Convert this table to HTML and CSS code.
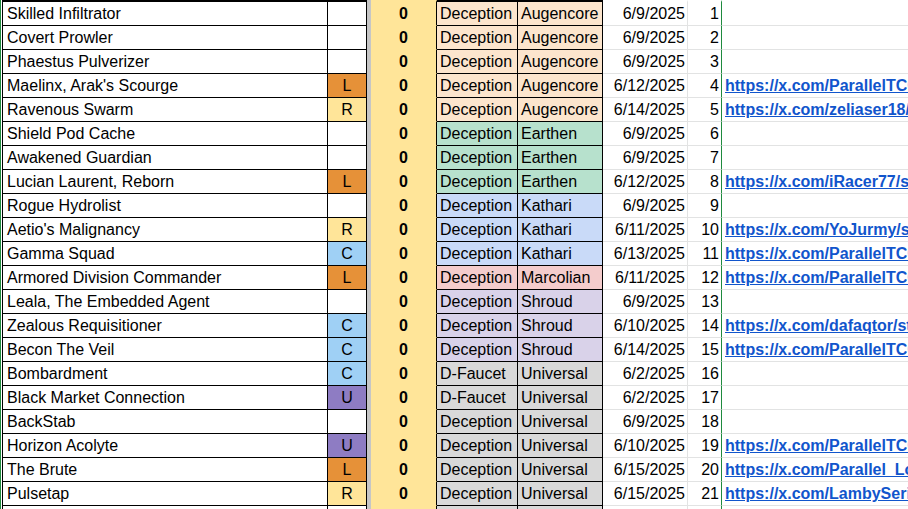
FILE: index.html
```html
<!DOCTYPE html>
<html lang="en">
<head>
<meta charset="utf-8">
<title>Deception cards</title>
<link rel="stylesheet" href="styles.css">
</head>
<body>
<div class="sheet">
  <div class="row first aug"><div class="name">Skilled Infiltrator</div><div class="rar"></div><div class="frz"></div><div class="cnt">0</div><div class="set">Deception</div><div class="fac">Augencore</div><div class="date">6/9/2025</div><div class="num">1</div><div class="link"></div></div>
  <div class="row aug"><div class="name">Covert Prowler</div><div class="rar"></div><div class="frz"></div><div class="cnt">0</div><div class="set">Deception</div><div class="fac">Augencore</div><div class="date">6/9/2025</div><div class="num">2</div><div class="link"></div></div>
  <div class="row aug"><div class="name">Phaestus Pulverizer</div><div class="rar"></div><div class="frz"></div><div class="cnt">0</div><div class="set">Deception</div><div class="fac">Augencore</div><div class="date">6/9/2025</div><div class="num">3</div><div class="link"></div></div>
  <div class="row aug"><div class="name">Maelinx, Arak's Scourge</div><div class="rar r-l">L</div><div class="frz"></div><div class="cnt">0</div><div class="set">Deception</div><div class="fac">Augencore</div><div class="date">6/12/2025</div><div class="num">4</div><div class="link"><a href="#">https://x.com/ParallelTCG/status/1933</a></div></div>
  <div class="row aug"><div class="name">Ravenous Swarm</div><div class="rar r-r">R</div><div class="frz"></div><div class="cnt">0</div><div class="set">Deception</div><div class="fac">Augencore</div><div class="date">6/14/2025</div><div class="num">5</div><div class="link"><a href="#">https://x.com/zeliaser18/status/1933</a></div></div>
  <div class="row ear"><div class="name">Shield Pod Cache</div><div class="rar"></div><div class="frz"></div><div class="cnt">0</div><div class="set">Deception</div><div class="fac">Earthen</div><div class="date">6/9/2025</div><div class="num">6</div><div class="link"></div></div>
  <div class="row ear"><div class="name">Awakened Guardian</div><div class="rar"></div><div class="frz"></div><div class="cnt">0</div><div class="set">Deception</div><div class="fac">Earthen</div><div class="date">6/9/2025</div><div class="num">7</div><div class="link"></div></div>
  <div class="row ear"><div class="name">Lucian Laurent, Reborn</div><div class="rar r-l">L</div><div class="frz"></div><div class="cnt">0</div><div class="set">Deception</div><div class="fac">Earthen</div><div class="date">6/12/2025</div><div class="num">8</div><div class="link"><a href="#">https://x.com/iRacer77/status/1933</a></div></div>
  <div class="row kat"><div class="name">Rogue Hydrolist</div><div class="rar"></div><div class="frz"></div><div class="cnt">0</div><div class="set">Deception</div><div class="fac">Kathari</div><div class="date">6/9/2025</div><div class="num">9</div><div class="link"></div></div>
  <div class="row kat"><div class="name">Aetio's Malignancy</div><div class="rar r-r">R</div><div class="frz"></div><div class="cnt">0</div><div class="set">Deception</div><div class="fac">Kathari</div><div class="date">6/11/2025</div><div class="num">10</div><div class="link"><a href="#">https://x.com/YoJurmy/status/1933</a></div></div>
  <div class="row kat"><div class="name">Gamma Squad</div><div class="rar r-c">C</div><div class="frz"></div><div class="cnt">0</div><div class="set">Deception</div><div class="fac">Kathari</div><div class="date">6/13/2025</div><div class="num">11</div><div class="link"><a href="#">https://x.com/ParallelTCG/status/1933</a></div></div>
  <div class="row mar"><div class="name">Armored Division Commander</div><div class="rar r-l">L</div><div class="frz"></div><div class="cnt">0</div><div class="set">Deception</div><div class="fac">Marcolian</div><div class="date">6/11/2025</div><div class="num">12</div><div class="link"><a href="#">https://x.com/ParallelTCG/status/1933</a></div></div>
  <div class="row shr"><div class="name">Leala, The Embedded Agent</div><div class="rar"></div><div class="frz"></div><div class="cnt">0</div><div class="set">Deception</div><div class="fac">Shroud</div><div class="date">6/9/2025</div><div class="num">13</div><div class="link"></div></div>
  <div class="row shr"><div class="name">Zealous Requisitioner</div><div class="rar r-c">C</div><div class="frz"></div><div class="cnt">0</div><div class="set">Deception</div><div class="fac">Shroud</div><div class="date">6/10/2025</div><div class="num">14</div><div class="link"><a href="#">https://x.com/dafaqtor/status/1933</a></div></div>
  <div class="row shr"><div class="name">Becon The Veil</div><div class="rar r-c">C</div><div class="frz"></div><div class="cnt">0</div><div class="set">Deception</div><div class="fac">Shroud</div><div class="date">6/14/2025</div><div class="num">15</div><div class="link"><a href="#">https://x.com/ParallelTCG/status/1934</a></div></div>
  <div class="row uni"><div class="name">Bombardment</div><div class="rar r-c">C</div><div class="frz"></div><div class="cnt">0</div><div class="set">D-Faucet</div><div class="fac">Universal</div><div class="date">6/2/2025</div><div class="num">16</div><div class="link"></div></div>
  <div class="row uni"><div class="name">Black Market Connection</div><div class="rar r-u">U</div><div class="frz"></div><div class="cnt">0</div><div class="set">D-Faucet</div><div class="fac">Universal</div><div class="date">6/2/2025</div><div class="num">17</div><div class="link"></div></div>
  <div class="row uni"><div class="name">BackStab</div><div class="rar"></div><div class="frz"></div><div class="cnt">0</div><div class="set">Deception</div><div class="fac">Universal</div><div class="date">6/9/2025</div><div class="num">18</div><div class="link"></div></div>
  <div class="row uni"><div class="name">Horizon Acolyte</div><div class="rar r-u">U</div><div class="frz"></div><div class="cnt">0</div><div class="set">Deception</div><div class="fac">Universal</div><div class="date">6/10/2025</div><div class="num">19</div><div class="link"><a href="#">https://x.com/ParallelTCG/status/1934</a></div></div>
  <div class="row uni"><div class="name">The Brute</div><div class="rar r-l">L</div><div class="frz"></div><div class="cnt">0</div><div class="set">Deception</div><div class="fac">Universal</div><div class="date">6/15/2025</div><div class="num">20</div><div class="link"><a href="#">https://x.com/Parallel_Lore/status/1934</a></div></div>
  <div class="row uni"><div class="name">Pulsetap</div><div class="rar r-r">R</div><div class="frz"></div><div class="cnt">0</div><div class="set">Deception</div><div class="fac">Universal</div><div class="date">6/15/2025</div><div class="num">21</div><div class="link"><a href="#">https://x.com/LambySeries/status/1934</a></div></div>
  <div class="row uni"><div class="name"></div><div class="rar"></div><div class="frz"></div><div class="cnt"></div><div class="set"></div><div class="fac"></div><div class="date"></div><div class="num"></div><div class="link"></div></div>
</div>
</body>
</html>
```
FILE: styles.css
```css
html, body {
  margin: 0;
  padding: 0;
  background: #ffffff;
}
body {
  width: 908px;
  height: 509px;
  overflow: hidden;
  font-family: "Liberation Sans", Arial, sans-serif;
  font-size: 16px;
  color: #000000;
}
.sheet {
  border-left: 1px solid #1e8a3e;
  padding-left: 1px;
  width: 907px;
  box-sizing: border-box;
}
.row {
  display: grid;
  grid-template-columns: 326px 39px 4px 66px 81px 85px 85px 34px 186px;
  height: 24px;
}
.row > div {
  box-sizing: border-box;
  height: 24px;
  line-height: 23px;
  white-space: nowrap;
  overflow: hidden;
  border-bottom: 1px solid #000000;
}
.row.first, .row.first > div {
  height: 26px;
}
.row.first > div {
  border-top: 2px solid #000000;
}
.name {
  border-left: 1px solid #000000;
  border-right: 1px solid #000000;
  padding-left: 4px;
}
.rar {
  border-right: 1px solid #000000;
  text-align: center;
}
.r-l { background: #e69138; }
.r-r { background: #ffe599; }
.r-c { background: #9fd0f5; }
.r-u { background: #8e7cc3; }
.row > .frz {
  background: #c6c6c6;
  border-bottom-color: #c6c6c6;
}
.row.first > .frz {
  border-top-color: #c6c6c6;
}
.row > .cnt {
  background: #ffe599;
  border-right: 1px solid #000000;
  border-bottom-color: #ffe599;
  font-weight: bold;
  text-align: center;
}
.row.first > .cnt {
  border-top-color: #ffe599;
}
.set, .fac {
  border-right: 1px solid #000000;
  padding-left: 3px;
}
.aug .set, .aug .fac { background: #fce5cd; }
.ear .set, .ear .fac { background: #b7e1cd; }
.kat .set, .kat .fac { background: #c9daf8; }
.mar .set, .mar .fac { background: #f4cccc; }
.shr .set, .shr .fac { background: #d9d2e9; }
.uni .set, .uni .fac { background: #d9d9d9; }
.row > .date {
  text-align: right;
  padding-right: 2px;
  border-right: 1px solid #e2e3e3;
  border-bottom-color: #e2e3e3;
}
.row > .num {
  text-align: right;
  padding-right: 2px;
  border-right: 1px solid #1e8a3e;
  border-bottom-color: #e2e3e3;
}
.row > .link {
  padding-left: 3px;
  border-bottom-color: #e2e3e3;
  overflow: hidden;
}
.row.first > .date, .row.first > .num, .row.first > .link {
  border-top-color: #ffffff;
}
.link a {
  color: #1155cc;
  font-weight: bold;
  text-decoration: underline;
}
```
